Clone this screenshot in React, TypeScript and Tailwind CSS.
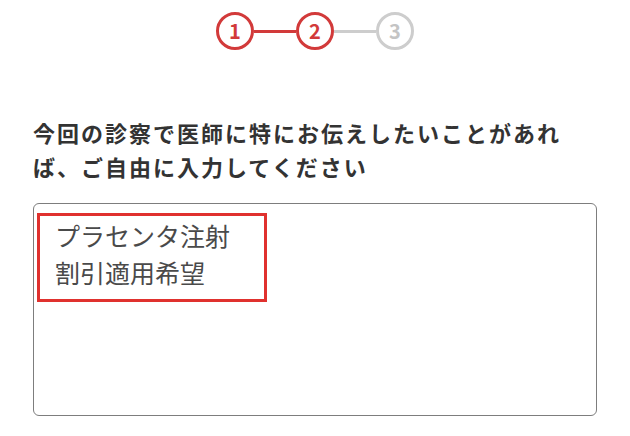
import React from 'react';

type StepState = 'done' | 'current' | 'todo';

const steps: { label: string; state: StepState }[] = [
  { label: '1', state: 'done' },
  { label: '2', state: 'current' },
  { label: '3', state: 'todo' },
];

const StepCircle: React.FC<{ label: string; state: StepState }> = ({ label, state }) => {
  const active = state !== 'todo';
  return (
    <div
      className={`w-[38px] h-[38px] rounded-full border-[3px] flex items-center justify-center font-bold text-[20px] leading-none ${
        active ? 'border-[#d23a3a] text-[#d23a3a]' : 'border-[#cdcdcd] text-[#c4c4c4]'
      }`}
    >
      {label}
    </div>
  );
};

const Stepper: React.FC = () => (
  <div className="flex items-center justify-center pt-[12px]">
    {steps.map((step, i) => (
      <React.Fragment key={step.label}>
        {i > 0 && (
          <div
            className={`w-[42px] h-[3px] ${
              step.state === 'todo' ? 'bg-[#cdcdcd]' : 'bg-[#d23a3a]'
            }`}
          />
        )}
        <StepCircle label={step.label} state={step.state} />
      </React.Fragment>
    ))}
  </div>
);

export default function App() {
  return (
    <div
      className="w-[630px] h-[436px] bg-white overflow-hidden"
      style={{ fontFamily: '"Noto Sans CJK JP", "Noto Sans", sans-serif' }}
    >
      <Stepper />

      <div className="px-[33px] mt-[65px]">
        {/* Question label */}
        <p className="w-[545px] text-[22px] leading-[34px] tracking-[2px] font-bold text-[#333]">
          今回の診察で医師に特にお伝えしたいことがあれば、ご自由に入力してください
        </p>

        {/* Free text field */}
        <div className="relative mt-[20px] w-[564px] h-[213px] rounded-[6px] border-[1.5px] border-[#7d7d7d] pl-[21px] pt-[13px]">
          <p className="text-[25px] leading-[37px] text-[#4a4a4a]">
            プラセンタ注射
            <br />
            割引適用希望
          </p>
          <div className="absolute left-[3px] top-[9px] w-[230px] h-[89px] border-[3px] border-[#e0312e]" />
        </div>
      </div>
    </div>
  );
}
